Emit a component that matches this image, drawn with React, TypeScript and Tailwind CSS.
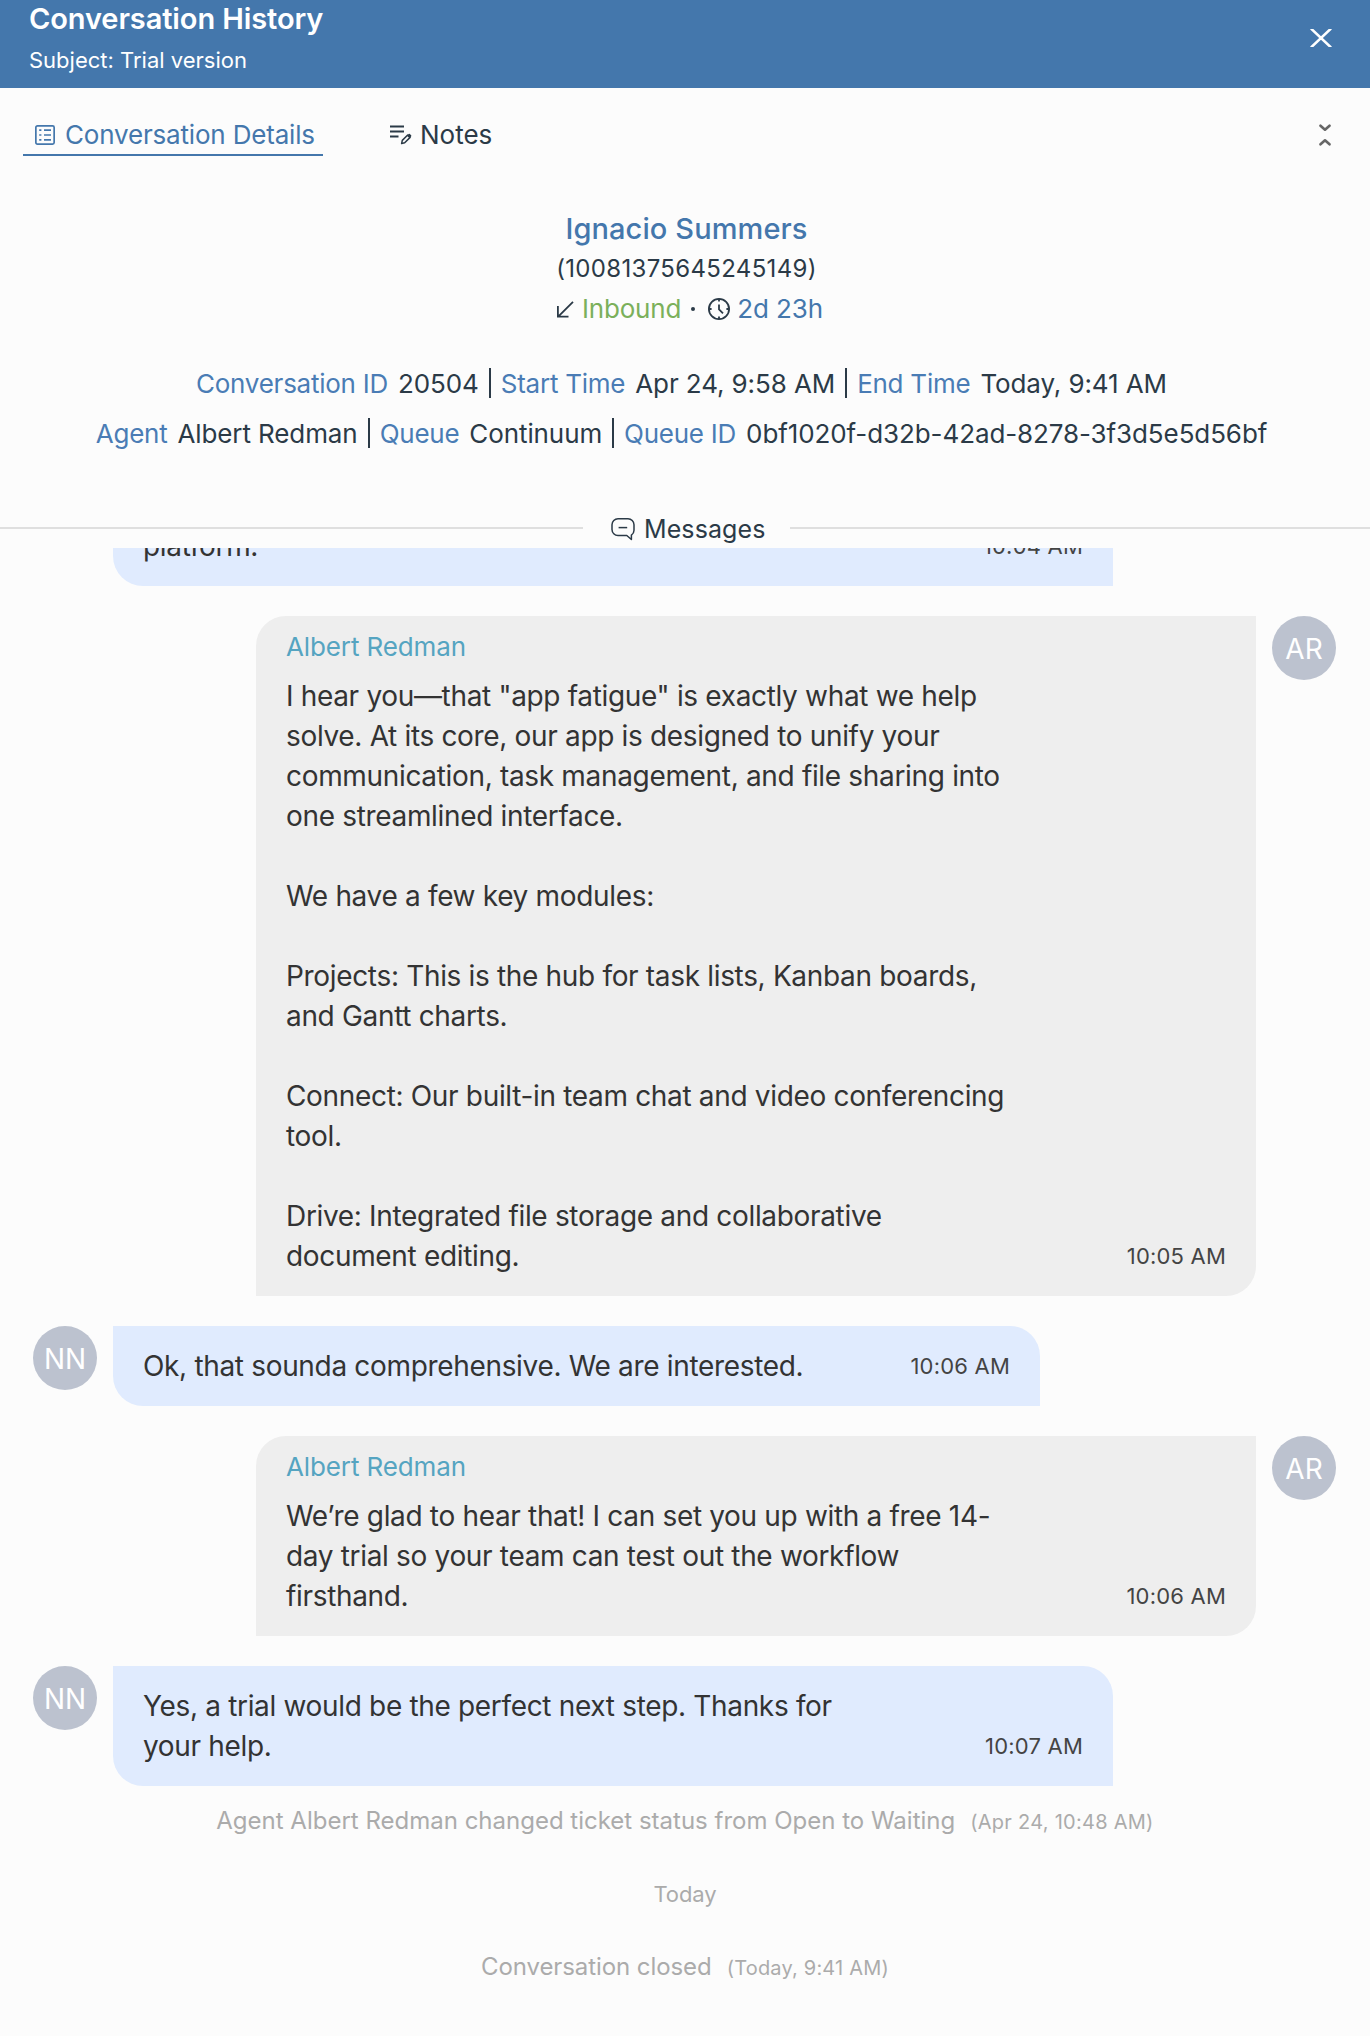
type Message = {
    side: "customer" | "agent"
    time: string
    lines: string[]
    hideAvatar?: boolean
    width: string
}

const messages: Message[] = [
    {
        side: "customer",
        time: "10:04 AM",
        hideAvatar: true,
        width: "w-[1000px]",
        lines: ["platform."],
    },
    {
        side: "agent",
        time: "10:05 AM",
        width: "w-[1000px]",
        lines: [
            'I hear you—that "app fatigue" is exactly what we help',
            "solve. At its core, our app is designed to unify your",
            "communication, task management, and file sharing into",
            "one streamlined interface.",
            "",
            "We have a few key modules:",
            "",
            "Projects: This is the hub for task lists, Kanban boards,",
            "and Gantt charts.",
            "",
            "Connect: Our built-in team chat and video conferencing",
            "tool.",
            "",
            "Drive: Integrated file storage and collaborative",
            "document editing.",
        ],
    },
    {
        side: "customer",
        time: "10:06 AM",
        width: "w-[927px]",
        lines: ["Ok, that sounda comprehensive. We are interested."],
    },
    {
        side: "agent",
        time: "10:06 AM",
        width: "w-[1000px]",
        lines: [
            "We’re glad to hear that! I can set you up with a free 14-",
            "day trial so your team can test out the workflow",
            "firsthand.",
        ],
    },
    {
        side: "customer",
        time: "10:07 AM",
        width: "w-[1000px]",
        lines: ["Yes, a trial would be the perfect next step. Thanks for", "your help."],
    },
]

const CloseIcon = () => (
    <svg width="22" height="18" viewBox="0 0 22 18" fill="none" stroke="currentColor" strokeWidth="2.5">
        <path d="M1 -0.5 21 18.5M21 -0.5 1 18.5" />
    </svg>
)

const CollapseIcon = () => (
    <svg
        width="12"
        height="22"
        viewBox="0 0 12 22"
        fill="none"
        stroke="currentColor"
        strokeWidth="2.6"
        strokeLinecap="round"
        strokeLinejoin="round"
    >
        <path d="M1.5 1.7 6 5.7l4.5-4M1.5 20.3 6 16.3l4.5 4" />
    </svg>
)

const ListIcon = () => (
    <svg width="20" height="20" viewBox="0 0 20 20" fill="none" stroke="currentColor" strokeWidth="1.7">
        <rect x="0.85" y="0.85" width="18.3" height="18.3" rx="1.6" />
        <path d="M9 5.2h7M9 10h7M9 14.8h7M4.2 5.2h2.2M4.2 10h2.2M4.2 14.8h2.2" />
    </svg>
)

const NotesIcon = () => (
    <svg width="22" height="20" viewBox="0 0 22 20" fill="none" stroke="currentColor" strokeWidth="1.8">
        <path d="M0 1.5h14M0 6.5h14M0 11.5h8.5" />
        <path d="m11.6 18.6.7-3.2 5.4-5.4 2.4 2.4-5.4 5.4-3.1.8Z" strokeWidth="1.5" strokeLinejoin="round" />
        <path d="m17 10.7 1.7-1.6q.6-.6 1.2 0l1.2 1.2q.6.6 0 1.2l-1.7 1.6Z" fill="currentColor" stroke="none" />
    </svg>
)

const ArrowIcon = () => (
    <svg width="17" height="17" viewBox="0 0 17 17" fill="none" stroke="currentColor" strokeWidth="1.8">
        <path d="M16 .8 1.2 15.6M.9 5v10.7H11.5" />
    </svg>
)

const ClockIcon = () => (
    <svg width="22" height="22" viewBox="0 0 22 22" fill="none" stroke="currentColor" strokeWidth="1.8">
        <circle cx="11" cy="11" r="10.1" />
        <path d="M11 1v2.6M11 18.4V21M1 11h2.6M18.4 11H21M11 6.4v4.9l4 4" />
    </svg>
)

const ChatIcon = () => (
    <svg width="24" height="23" viewBox="0 0 24 23" fill="none" stroke="currentColor" strokeWidth="1.5">
        <path
            d="M7 .8h10a6 6 0 0 1 6 6v5.4a6 6 0 0 1-2.6 4.9V21.5l-4.6-4H7a6 6 0 0 1-6-6V6.8a6 6 0 0 1 6-6Z"
            strokeLinejoin="round"
        />
        <path d="M7.6 9.6h8.6" />
    </svg>
)

const Field: React.FC<{ label: string; value: string }> = ({ label, value }) => (
    <div className="flex gap-2.5">
        <span className="tracking-[-0.25px] text-[#4a7cb5]">{label}</span>
        <span className="tracking-[-0.1px]">{value}</span>
    </div>
)

const Divider = () => <div className="mx-2.5 h-[30px] w-[2px] bg-[#2b3a47]" />

const Avatar: React.FC<{ initials: string }> = ({ initials }) => (
    <div className="flex size-16 shrink-0 items-center justify-center rounded-full bg-[#bcc2cf] pt-px text-[28px] text-white">
        {initials}
    </div>
)

const Bubble: React.FC<{ message: Message }> = ({ message }) => {
    const isAgent = message.side === "agent"

    return (
        <div className={isAgent ? "flex justify-end gap-4 pr-[34px]" : "flex gap-4 pl-[33px]"}>
            {!isAgent && (message.hideAvatar ? <div className="w-16" /> : <Avatar initials="NN" />)}
            <div
                className={`${message.width} px-[30px] pb-5 leading-10 ${
                    isAgent
                        ? "rounded-tl-[30px] rounded-br-[30px] bg-[#eeeeee] pt-[11px]"
                        : "rounded-tr-[30px] rounded-bl-[30px] bg-[#e0ebfe] pt-5"
                }`}
            >
                {isAgent && (
                    <div className="mb-[9px] text-[26px] tracking-[-0.12px] text-[#55a4c1]">Albert Redman</div>
                )}
                <div className="flex items-end justify-between">
                    <p className="whitespace-pre text-[28px] tracking-[-0.33px] text-[#333]">
                        {message.lines.join("\n")}
                    </p>
                    <span className="text-[22px] tracking-[0.2px] text-[#444]">{message.time}</span>
                </div>
            </div>
            {isAgent && <Avatar initials="AR" />}
        </div>
    )
}

const App: React.FC = () => {
    return (
        <div className="flex h-[2036px] w-[1370px] flex-col overflow-hidden bg-[#fcfcfc] font-['Inter',sans-serif] text-[#2b3a47]">
            <header className="flex h-[88px] shrink-0 justify-between bg-[#4477ac] pr-[38px] pl-[29px] text-white">
                <div>
                    <h1 className="text-[29px] leading-[37px] font-semibold tracking-[-0.1px]">Conversation History</h1>
                    <p className="mt-[7px] text-[22px] leading-8">Subject: Trial version</p>
                </div>
                <button type="button" aria-label="Close" className="mt-[29px] h-[18px]">
                    <CloseIcon />
                </button>
            </header>

            <nav className="mt-[27px] flex h-[41px] shrink-0 items-start pr-[39px] pl-[23px] text-[26px] leading-[39px]">
                <button
                    type="button"
                    className="flex w-[300px] items-center gap-2.5 border-b-2 border-[#4477ac] pl-3 tracking-[-0.18px] text-[#4477ac]"
                >
                    <ListIcon />
                    Conversation Details
                </button>
                <button type="button" className="ml-[67px] flex items-center gap-2">
                    <NotesIcon />
                    Notes
                </button>
                <button type="button" aria-label="Collapse" className="mt-[9px] ml-auto h-[22px] text-[#666]">
                    <CollapseIcon />
                </button>
            </nav>

            <section className="mt-[53px] shrink-0">
                <h2 className="pl-[3px] text-center text-[29px] leading-[39px] font-medium tracking-[0.1px] text-[#4477ac]">
                    Ignacio Summers
                </h2>
                <p className="mt-px pl-[3px] text-center text-[24px] leading-10 tracking-[0.33px]">(10081375645245149)</p>
                <div className="flex items-center justify-center pl-2.5 text-[26px] leading-10">
                    <ArrowIcon />
                    <span className="ml-2 tracking-[-0.2px] text-[#7bb05b]">Inbound</span>
                    <span className="mx-2.5 size-1 rounded-full bg-[#2b3a47]" />
                    <span className="ml-[3px]">
                        <ClockIcon />
                    </span>
                    <span className="ml-[7px] tracking-[-0.1px] text-[#4477ac]">2d 23h</span>
                </div>
            </section>

            <section className="mt-[29px] shrink-0 pr-[7px] text-[26px] whitespace-nowrap">
                <div className="flex h-[50px] items-center justify-center">
                    <Field label="Conversation ID" value="20504" />
                    <Divider />
                    <Field label="Start Time" value="Apr 24, 9:58 AM" />
                    <Divider />
                    <Field label="End Time" value="Today, 9:41 AM" />
                </div>
                <div className="flex h-[50px] items-center justify-center">
                    <Field label="Agent" value="Albert Redman" />
                    <Divider />
                    <Field label="Queue" value="Continuum" />
                    <Divider />
                    <Field label="Queue ID" value="0bf1020f-d32b-42ad-8278-3f3d5e5d56bf" />
                </div>
            </section>

            <div className="mt-[52px] flex h-[38px] shrink-0 items-center">
                <div className="mb-0.5 h-0.5 w-[583px] bg-[#dfdfdf]" />
                <div className="flex w-[207px] items-center gap-[9px] pl-7 text-[25px] leading-[38px] tracking-[0.1px]">
                    <ChatIcon />
                    Messages
                </div>
                <div className="mb-0.5 h-0.5 grow bg-[#dfdfdf]" />
            </div>

            <main className="min-h-0 grow overflow-hidden">
                <div className="-mt-[42px] flex flex-col gap-[30px]">
                    {messages.map((message, i) => (
                        <Bubble key={i} message={message} />
                    ))}
                </div>
                <div className="flex flex-col items-center leading-10 text-[#ababab]">
                    <div className="mt-[15px] flex items-baseline gap-[15px] text-[24px]">
                        Agent Albert Redman changed ticket status from Open to Waiting
                        <span className="text-[20px] tracking-[0.27px]">(Apr 24, 10:48 AM)</span>
                    </div>
                    <div className="mt-8 text-[22px] tracking-[-0.1px]">Today</div>
                    <div className="mt-[33px] flex items-baseline gap-[15px] text-[24px] tracking-[-0.08px]">
                        Conversation closed
                        <span className="text-[20px] tracking-[0.2px]">(Today, 9:41 AM)</span>
                    </div>
                </div>
            </main>
        </div>
    )
}

export default App
